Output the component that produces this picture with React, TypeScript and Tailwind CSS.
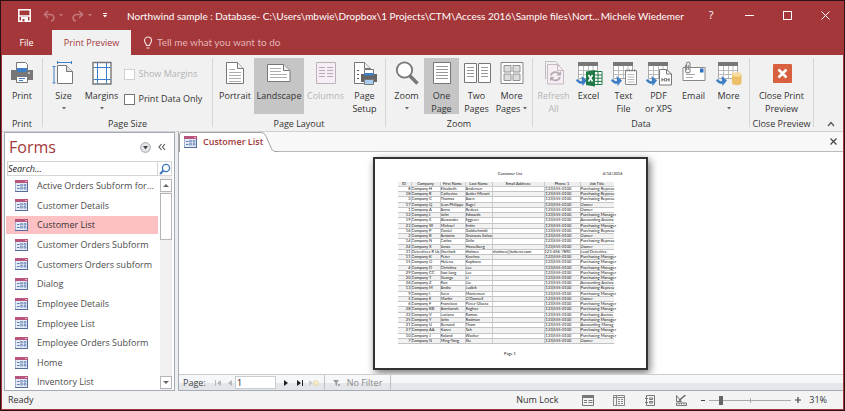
import type { ReactNode } from "react";

const FORMS = [
  "Active Orders Subform for...",
  "Customer Details",
  "Customer List",
  "Customer Orders Subform",
  "Customers Orders subform",
  "Dialog",
  "Employee Details",
  "Employee List",
  "Employee Orders Subform",
  "Home",
  "Inventory List",
];

const PHONE = "(123)555-0100";
const MANAGER = "Purchasing Manager";
const REP = "Purchasing Represe";

const HEADERS = ["ID", "Company", "First Name", "Last Name", "Email Address", "Phone 1", "Job Title"];

const COLUMN_WIDTHS = [
  "w-[14px]",
  "w-[29px]",
  "w-[25px]",
  "w-[27px]",
  "w-[52px]",
  "w-[36px]",
  "w-[33px]",
];

const CUSTOMERS: string[][] = [
  ["8", "Company H", "Elizabeth", "Andersen", "", PHONE, REP],
  ["18", "Company R", "Catherine", "Autier Miconi", "", PHONE, REP],
  ["3", "Company C", "Thomas", "Axen", "", PHONE, REP],
  ["17", "Company Q", "Jean Philippe", "Bagel", "", PHONE, "Owner"],
  ["1", "Company A", "Anna", "Bedecs", "", PHONE, "Owner"],
  ["12", "Company L", "John", "Edwards", "", PHONE, MANAGER],
  ["19", "Company S", "Alexander", "Eggerer", "", PHONE, "Accounting Assista"],
  ["23", "Company W", "Michael", "Entin", "", PHONE, MANAGER],
  ["16", "Company P", "Daniel", "Goldschmidt", "", PHONE, REP],
  ["2", "Company B", "Antonio", "Gratacos Solsona", "", PHONE, "Owner"],
  ["14", "Company N", "Carlos", "Grilo", "", PHONE, REP],
  ["24", "Company X", "Jonas", "Hasselberg", "", PHONE, "Owner"],
  ["31", "Detectives R Us", "Sherlock", "Holmes", "sholmes@bakerst.com", "123-456-7890", "Lead Detective"],
  ["11", "Company K", "Peter", "Krschne", "", PHONE, MANAGER],
  ["15", "Company O", "Helena", "Kupkova", "", PHONE, MANAGER],
  ["4", "Company D", "Christina", "Lee", "", PHONE, MANAGER],
  ["29", "Company CC", "Soo Jung", "Lee", "", PHONE, MANAGER],
  ["20", "Company T", "George", "Li", "", PHONE, MANAGER],
  ["26", "Company Z", "Run", "Liu", "", PHONE, "Accounting Assista"],
  ["13", "Company M", "Andre", "Ludick", "", PHONE, REP],
  ["9", "Company I", "Sven", "Mortensen", "", PHONE, MANAGER],
  ["5", "Company E", "Martin", "O'Donnell", "", PHONE, "Owner"],
  ["6", "Company F", "Francisco", "Pérez-Olaeta", "", PHONE, MANAGER],
  ["28", "Company BB", "Amritansh", "Raghav", "", PHONE, MANAGER],
  ["22", "Company V", "Luciana", "Ramos", "", PHONE, "Purchasing Assista"],
  ["25", "Company Y", "John", "Rodman", "", PHONE, MANAGER],
  ["21", "Company U", "Bernard", "Tham", "", PHONE, "Accounting Manag"],
  ["27", "Company AA", "Karen", "Toh", "", PHONE, MANAGER],
  ["10", "Company J", "Roland", "Wacker", "", PHONE, MANAGER],
  ["7", "Company G", "Ming-Yang", "Xie", "", PHONE, "Owner"],
];

function Icon({ children, className = "size-6" }: { children: ReactNode; className?: string }) {
  return (
    <svg viewBox="0 0 24 24" fill="none" className={`shrink-0 ${className}`} aria-hidden="true">
      {children}
    </svg>
  );
}

function Caret({ className = "text-[#666]" }: { className?: string }) {
  return (
    <svg viewBox="0 0 4 3" className={`inline-block h-[3px] w-1 shrink-0 ${className}`} aria-hidden="true">
      <path d="M0 0h4L2 2.6z" fill="currentColor" />
    </svg>
  );
}

function FormIcon() {
  return (
    <svg viewBox="0 0 13 12" className="h-3 w-[13px] shrink-0" aria-hidden="true">
      <rect x="0" y="0" width="13" height="12" fill="#a3b1cc" />
      <rect x="1" y="3" width="11" height="8" fill="#e4ebf7" />
      <rect x="0" y="0" width="13" height="3" fill="#b8557d" />
      <rect x="10" y="1" width="2" height="1" fill="#eeb5c9" />
      <path d="M2 5.5h2.5M2 8.500h2.5" stroke="#5f7cae" />
      <path d="M5.500 4.500h2v1.600h-2zM9 4.500h2v1.600H9zM5.500 7.500h2v1.600h-2zM9 7.500h2v1.600H9z" fill="#b9c9e4" stroke="#6b86b5" strokeWidth=".7" />
      <path d="M0 11.500h13M12.500 3v9" stroke="#566c9a" />
    </svg>
  );
}

const PrintIcon = (
  <Icon>
    <path d="M6.500 1.500h9l2 2v7h-11z" fill="#fff" stroke="#777" />
    <path d="M1 9h22v10H1z" fill="#777" />
    <path d="M7 7h10v4H7z" fill="#3d7ec4" />
    <path d="M18 12h2" stroke="#fff" />
    <path d="M6.500 15.500h11v6h-11z" fill="#fff" stroke="#777" />
    <path d="M9 17.500h6M9 19.500h4" stroke="#3d7ec4" />
  </Icon>
);

const SizeIcon = (
  <Icon>
    <path d="M5.500 4.500h9l6 6v12h-15z" fill="#fff" stroke="#777" />
    <path d="M14.500 4.500v6h6" fill="#ddd" stroke="#777" />
    <path d="M5 1.500h15M5.500 0v3M19.500 0v3M2 5v17M.5 5.500h3M.5 22h3" stroke="#3d7ec4" />
  </Icon>
);

const MarginsIcon = (
  <Icon>
    <path d="M3 1.500h18v21.500H3z" fill="#fff" stroke="#777" strokeWidth="1.400" />
    <path d="M7.500 2v20.500M16.500 2v20.500M3.500 6.500h17M3.500 18.500h17" stroke="#3d7ec4" />
  </Icon>
);

const PortraitIcon = (
  <Icon>
    <path d="M3.500 1.500h11l6 6v15h-17z" fill="#fff" stroke="#777" />
    <path d="M14.500 1.500v6h6" fill="#eee" stroke="#777" />
    <path d="M6 8.500h6M6 11.500h12M6 14.500h12M6 17.500h12M6 20.500h12" stroke="#999" strokeWidth=".8" />
  </Icon>
);

const LandscapeIcon = (
  <Icon>
    <path d="M.5 3.500h16l6.500 6v11H.5z" fill="#fff" stroke="#777" />
    <path d="M16.500 3.500v6h6" fill="#eee" stroke="#777" />
    <path d="M3 7.500h11M3 10.500h11M3 13.500h17M3 16.500h17" stroke="#999" strokeWidth=".8" />
  </Icon>
);

const ColumnsIcon = (
  <Icon>
    <path d="M2.500 1.500h19v21h-19z" fill="#f6eef4" stroke="#bbb3b9" />
    <path d="M5 6.500h6M5 9.500h6M5 12.500h6M5 15.500h6M13 6.500h6M13 9.500h6M13 12.500h6M13 15.500h6" stroke="#b9a9b5" />
  </Icon>
);

const PageSetupIcon = (
  <Icon>
    <path d="M1.500 1.500h10l6 6v15h-16z" fill="#fff" stroke="#777" />
    <path d="M11.500 1.500v6h6" fill="#eee" stroke="#777" />
    <path d="M4 9.500h2M4 13.500h2M4 17.500h2" stroke="#555" />
    <path d="M11.500 8.500h9v4h-9z" fill="#fff" stroke="#777" />
    <path d="M8 13h16v8H8z" fill="#666" />
    <path d="M11 12h10v2.500H11z" fill="#3d7ec4" />
    <path d="M11.500 18.500h9v5h-9z" fill="#a9cdf0" stroke="#777" />
  </Icon>
);

const ZoomIcon = (
  <Icon>
    <path d="M14.500 14.500l8 8" stroke="#777" strokeWidth="3.500" />
    <circle cx="9.500" cy="9" r="7.700" fill="#fff" stroke="#777" strokeWidth="1.800" />
  </Icon>
);

const OnePageIcon = (
  <Icon>
    <path d="M3.500 1.500h17v21h-17z" fill="#fff" stroke="#777" />
    <path d="M6 5.500h12M6 8.500h12M6 11.500h12M6 14.500h12M6 17.500h12" stroke="#999" />
  </Icon>
);

const TwoPagesIcon = (
  <svg viewBox="0 0 28 24" fill="none" className="h-6 w-7 shrink-0" aria-hidden="true">
    <path d="M1.500 2.500h12v19h-12zM15.500 2.500h12v19h-12z" fill="#fff" stroke="#777" />
    <path d="M4 6.500h7M4 9.500h7M4 12.500h7M4 15.500h7M18 6.500h7M18 9.500h7M18 12.500h7M18 15.500h7" stroke="#999" />
  </svg>
);

const MorePagesIcon = (
  <Icon>
    <path d="M1 1.500h22v21H1z" fill="#fff" stroke="#888" />
    <path d="M4 4.500h7v6.500H4zM13 4.500h7v6.500h-7zM4 13h7v6.500H4zM13 13h7v6.500h-7z" fill="#ddd" stroke="#888" strokeWidth=".9" />
  </Icon>
);

const RefreshIcon = (
  <Icon>
    <path d="M3.500 18V.5h10l4 4" stroke="#c4bac2" />
    <path d="M5.500 3.500h10l6 6v13.500h-16z" fill="#f6eef4" stroke="#c4bac2" />
    <path d="M15.500 3.500v6h6" stroke="#c4bac2" />
    <path d="M9 14.500c.8-4 6-4.500 8.500-1.500M18 16c-1 4-6 4.500-8.500 1.500" stroke="#b3abb1" strokeWidth="1.800" />
    <path d="M19 10v4.500h-4.500zM8 20.500V16h4.500z" fill="#b3abb1" />
  </Icon>
);

function ExportBase({ children }: { children: ReactNode }) {
  return (
    <svg viewBox="0 0 28 26" fill="none" className="-mb-[2px] h-[26px] w-7 shrink-0" aria-hidden="true">
      <path d="M3.500 1.500h19v16h-19z" fill="#fff" stroke="#aaa" />
      <path d="M3 1h20v4H3z" fill="#777" />
      <path d="M8.500 5v12M13.500 5v12M18 5v12M4 9.500h18M4 13.500h18" stroke="#bbb" />
      <path d="M2 18.500c1.500 3.500 4.500 3.500 7.500 2" stroke="#3d7ec4" strokeWidth="2.600" />
      <path d="M6.500 15l5.500 4.500-4.500 5.500z" fill="#3d7ec4" />
      {children}
    </svg>
  );
}

const ExcelIcon = (
  <ExportBase>
    <path d="M19 10.500h8v13h-8z" fill="#fff" stroke="#1f7a46" />
    <path d="M19 14h8M19 17.200h8M19 20.400h8M23 10.500v13" stroke="#1f7a46" />
    <path d="M11 10.500l9-1.500v16.500l-9-1.500z" fill="#1f7a46" />
    <path d="M13.500 14l4 6.500M17.500 14l-4 6.500" stroke="#fff" strokeWidth="1.500" />
  </ExportBase>
);

const TextFileIcon = (
  <ExportBase>
    <path d="M15.500 9.500h11v14h-11z" fill="#fff" stroke="#888" />
    <path d="M17 8.500v2M19.500 8.500v2M22 8.500v2M24.500 8.500v2" stroke="#777" />
    <path d="M17.500 13.500h7M17.500 16h7M17.500 18.500h7M17.500 21h7" stroke="#aaa" strokeWidth=".8" />
  </ExportBase>
);

const PdfIcon = (
  <ExportBase>
    <path d="M14.500 8.500h7l5 4.500v11h-12z" fill="#fff" stroke="#777" />
    <path d="M21.500 8.500v4.500h5" stroke="#777" />
    <path d="M17 17v3.500M24 17v3.500M17 18.800h2M22 18.800h2" stroke="#666" />
    <path d="M19.500 17.500h2v2.500h-2z" stroke="#666" strokeWidth=".8" />
  </ExportBase>
);

const EmailIcon = (
  <Icon>
    <path d="M1 6.500h22v13H1z" fill="#fff" stroke="#888" />
    <path d="M18 7.500h3.500v4H18z" fill="#2f6fc2" />
    <path d="M4 13.500h9M4 16.500h7" stroke="#aaa" />
    <path d="M3.500 4v6c0 2.500 4.500 2.500 4.500 0V3c0-3-3.500-2.500-3.500 0v6M6.300 4v5" stroke="#888" strokeWidth="1.100" />
  </Icon>
);

const MoreDataIcon = (
  <ExportBase>
    <path d="M17 13.500v8.500c0 3 9.500 3 9.500 0v-8.500z" fill="#ecc068" />
    <ellipse cx="21.750" cy="13.500" rx="4.750" ry="2.200" fill="#f7dc9c" />
  </ExportBase>
);

const ClosePreviewIcon = (
  <Icon>
    <rect x="3" y="3" width="19" height="19" rx="1" fill="#d9603f" />
    <path d="M8.500 8.500l8 8M16.500 8.500l-8 8" stroke="#fff" strokeWidth="2.500" />
  </Icon>
);

type RibbonButtonProps = {
  icon: ReactNode;
  lines: string[];
  width?: string;
  caret?: boolean;
  active?: boolean;
  disabled?: boolean;
};

function RibbonButton({ icon, lines, width = "w-[35px]", caret, active, disabled }: RibbonButtonProps) {
  const inlineCaret = caret && lines.length > 1;
  return (
    <button
      type="button"
      disabled={disabled}
      aria-pressed={active}
      className={`flex h-14 shrink-0 flex-col items-center pt-[3px] whitespace-nowrap ${width} ${
        active ? "bg-[#c5c5c5]" : ""
      } ${disabled ? "text-[#b5b5b5]" : ""}`}
    >
      <span className="mb-1 flex h-6 items-start">{icon}</span>
      {lines.map((line, index) => (
        <span key={line} className="flex items-center gap-[3px] leading-[13px]">
          {line}
          {inlineCaret && index === lines.length - 1 ? <Caret /> : null}
        </span>
      ))}
      {caret && !inlineCaret ? (
        <span className="flex h-3 items-center">
          <Caret />
        </span>
      ) : null}
    </button>
  );
}

function RibbonGroup({ label, width, children }: { label: string; width: string; children: ReactNode }) {
  return (
    <section aria-label={label} className={`flex shrink-0 pt-[3px] pb-1 ${width}`}>
      <div className="flex min-w-0 flex-1 flex-col">
        <div className="flex justify-center">{children}</div>
        <div className="pt-[3px] text-center leading-[14px] whitespace-nowrap">{label}</div>
      </div>
      <div className="w-px bg-[#d6d6d6]" />
    </section>
  );
}

function TitleBar() {
  return (
    <header className="flex h-[29px] shrink-0 items-center text-white">
      <div className="flex w-[126px] shrink-0 items-center pl-[17px]">
        <button type="button" aria-label="Save">
          <svg viewBox="0 0 13 13" fill="none" className="size-[13px]" aria-hidden="true">
            <path d="M.8.8h11.400v11.400H.8z" stroke="#fff" strokeWidth="1.500" />
            <path d="M1 7h11" stroke="#fff" strokeWidth="1.500" />
            <path d="M3 8h7v4.500H3z" fill="#fff" />
            <path d="M4.500 10h2v2.500h-2z" fill="#a4373a" />
          </svg>
        </button>
        <button type="button" aria-label="Undo" className="ml-3 flex items-center gap-1 text-[#c4777a]">
          <svg viewBox="0 0 12 12" fill="none" className="size-3" aria-hidden="true">
            <path d="M5 1L1.500 4.500 5 8M1.500 4.500H7c5 0 5 6 1 6.500" stroke="currentColor" strokeWidth="1.600" />
          </svg>
          <Caret className="text-[#c4777a]" />
        </button>
        <button type="button" aria-label="Redo" className="ml-[9px] flex items-center gap-1 text-[#c4777a]">
          <svg viewBox="0 0 12 12" fill="none" className="size-3" aria-hidden="true">
            <path d="M7 1l3.500 3.500L7 8M10.500 4.500H5c-5 0-5 6-1 6.500" stroke="currentColor" strokeWidth="1.600" />
          </svg>
          <Caret className="text-[#c4777a]" />
        </button>
        <button type="button" aria-label="Customize Quick Access Toolbar" className="ml-[11px] flex flex-col items-center gap-px">
          <span className="h-px w-1 bg-white" />
          <Caret className="text-white" />
        </button>
      </div>
      <h1 className="min-w-0 flex-1 truncate font-[Lato,'Open_Sans',sans-serif] text-[10px] leading-4">
        Northwind sample : Database- C:\Users\mbwie\Dropbox\1 Projects\CTM\Access 2016\Sample files\Nort...
      </h1>
      <div className="flex shrink-0 items-center">
        <button type="button" className="mr-2 font-[Lato,'Open_Sans',sans-serif] text-[10px] leading-4">
          Michele Wiedemer
        </button>
        <button type="button" aria-label="Help" className="flex w-[38px] justify-center text-[11px]">
          ?
        </button>
        <button type="button" aria-label="Minimize" className="flex w-[38px] justify-center">
          <span className="h-px w-[9px] bg-white" />
        </button>
        <button type="button" aria-label="Maximize" className="flex w-[38px] justify-center">
          <span className="size-[9px] border border-white" />
        </button>
        <button type="button" aria-label="Close" className="flex w-[38px] justify-center">
          <svg viewBox="0 0 9 9" className="size-[9px]" aria-hidden="true">
            <path d="M.5.5l8 8M8.500.5l-8 8" stroke="#fff" />
          </svg>
        </button>
      </div>
    </header>
  );
}

function TabRow() {
  return (
    <nav className="flex h-[25px] shrink-0 items-stretch text-white">
      <button type="button" className="w-[51px]">File</button>
      <button type="button" className="w-[79px] bg-[#f1f1f1] text-[#a4373a]">
        Print Preview
      </button>
      <button type="button" className="ml-3 flex items-center gap-1 font-[Lato,'Open_Sans',sans-serif] text-[10px] text-[#e3b6b7]">
        <svg viewBox="0 0 10 13" fill="none" className="h-[13px] w-[10px]" aria-hidden="true">
          <path d="M3.500 9.500c0-2-2-2.500-2-5a3.500 3.500 0 017 0c0 2.500-2 3-2 5zM3.500 12h3" stroke="#f6e3e3" strokeWidth="1.100" />
        </svg>
        Tell me what you want to do
      </button>
    </nav>
  );
}

function Ribbon() {
  return (
    <div className="flex h-[77px] shrink-0 border-b border-[#d2d2d2] bg-[#f1f1f1] text-[#333]">
      <RibbonGroup label="Print" width="w-[41px]">
        <RibbonButton icon={PrintIcon} lines={["Print"]} width="w-[38px]" />
      </RibbonGroup>
      <RibbonGroup label="Page Size" width="w-[170px]">
        <RibbonButton icon={SizeIcon} lines={["Size"]} width="w-[38px]" caret />
        <RibbonButton icon={MarginsIcon} lines={["Margins"]} width="w-[38px]" caret />
        <div className="flex w-[90px] flex-col gap-[11px] pt-[9px] pl-[3px]">
          <label className="flex items-center gap-1 leading-[14px] whitespace-nowrap text-[#b5b5b5]">
            <input type="checkbox" disabled className="size-[11px] appearance-none border border-[#d0d0d0] bg-white" />
            Show Margins
          </label>
          <label className="flex items-center gap-1 leading-[14px] whitespace-nowrap">
            <input
              type="checkbox"
              className="size-[11px] appearance-none border border-[#777] bg-white checked:bg-[#a4373a]"
            />
            Print Data Only
          </label>
        </div>
      </RibbonGroup>
      <RibbonGroup label="Page Layout" width="w-[173px]">
        <RibbonButton icon={PortraitIcon} lines={["Portrait"]} width="w-[38px]" />
        <RibbonButton icon={LandscapeIcon} lines={["Landscape"]} width="w-[50px]" active />
        <RibbonButton icon={ColumnsIcon} lines={["Columns"]} width="w-[43px]" disabled />
        <RibbonButton icon={PageSetupIcon} lines={["Page", "Setup"]} />
      </RibbonGroup>
      <RibbonGroup label="Zoom" width="w-[147px]">
        <RibbonButton icon={ZoomIcon} lines={["Zoom"]} caret />
        <RibbonButton icon={OnePageIcon} lines={["One", "Page"]} active />
        <RibbonButton icon={TwoPagesIcon} lines={["Two", "Pages"]} />
        <RibbonButton icon={MorePagesIcon} lines={["More", "Pages"]} caret />
      </RibbonGroup>
      <RibbonGroup label="Data" width="w-[217px]">
        <RibbonButton icon={RefreshIcon} lines={["Refresh", "All"]} disabled />
        <RibbonButton icon={ExcelIcon} lines={["Excel"]} />
        <RibbonButton icon={TextFileIcon} lines={["Text", "File"]} />
        <RibbonButton icon={PdfIcon} lines={["PDF", "or XPS"]} />
        <RibbonButton icon={EmailIcon} lines={["Email"]} />
        <RibbonButton icon={MoreDataIcon} lines={["More"]} caret />
      </RibbonGroup>
      <RibbonGroup label="Close Preview" width="w-[64px]">
        <RibbonButton icon={ClosePreviewIcon} lines={["Close Print", "Preview"]} width="w-[60px]" />
      </RibbonGroup>
      <div className="flex flex-1 items-end justify-end pr-2 pb-1">
        <button type="button" aria-label="Collapse the Ribbon">
          <svg viewBox="0 0 8 6" fill="none" className="h-[6px] w-2" aria-hidden="true">
            <path d="M1 5l3-3.500L7 5" stroke="#555" strokeWidth="1.300" />
          </svg>
        </button>
      </div>
    </div>
  );
}

function NavigationPane() {
  return (
    <aside className="flex w-[171px] shrink-0 flex-col overflow-hidden border border-[#a5abb5] bg-white">
      <div className="flex h-7 shrink-0 items-center pr-2 pl-1">
        <h2 className="flex-1 text-[16px] leading-7 text-[#a4373a]">Forms</h2>
        <button type="button" aria-label="Filter objects">
          <svg viewBox="0 0 11 11" className="size-[11px]" aria-hidden="true">
            <circle cx="5.500" cy="5.500" r="4.800" fill="#e8eaee" stroke="#999da5" />
            <path d="M3 4h5L5.500 7.500z" fill="#444" />
          </svg>
        </button>
        <button type="button" aria-label="Shutter bar" className="ml-[7px]">
          <svg viewBox="0 0 8 8" fill="none" className="size-2" aria-hidden="true">
            <path d="M3.500 1L1 4l2.500 3M7 1L4.500 4 7 7" stroke="#555" strokeWidth="1.100" />
          </svg>
        </button>
      </div>
      <div className="mx-[2px] flex h-[15px] shrink-0 border border-[#d5d5d5]">
        <input
          type="text"
          aria-label="Search"
          placeholder="Search..."
          className="min-w-0 flex-1 italic outline-none placeholder:text-[#222]"
        />
        <button type="button" aria-label="Search forms" className="flex w-[14px] items-center justify-center border-l border-[#d5d5d5]">
          <svg viewBox="0 0 12 12" fill="none" className="size-3" aria-hidden="true">
            <circle cx="7" cy="5" r="3.600" stroke="#3d74b5" strokeWidth="1.300" />
            <path d="M4.500 7.500L1 11" stroke="#3d74b5" strokeWidth="2" />
          </svg>
        </button>
      </div>
      <div className="flex min-h-0 flex-1">
        <ul className="-mb-[2px] flex min-w-0 flex-1 flex-col pl-px">
          {FORMS.map((form) => (
            <li key={form} className="flex flex-1 items-center">
              <button
                type="button"
                className={`flex h-[18px] w-full items-center gap-[9px] pl-[9px] text-left whitespace-nowrap ${
                  form === "Customer List" ? "bg-[#fdc0c3] text-[#333]" : "text-[#4c4c4c]"
                }`}
              >
                <FormIcon />
                {form}
              </button>
            </li>
          ))}
        </ul>
        <div className="mr-[2px] ml-[2px] flex w-3 shrink-0 flex-col bg-[#f0f0f0] pt-[3px] pb-px">
          <button type="button" aria-label="Scroll up" className="flex h-[13px] items-center justify-center border border-[#b5b5b5] bg-white">
            <svg viewBox="0 0 6 3" className="h-[3px] w-[6px]" aria-hidden="true">
              <path d="M0 3h6L3 0z" fill="#666" />
            </svg>
          </button>
          <div className="mt-px h-[47px] border border-[#b5b5b5] bg-white" />
          <button type="button" aria-label="Scroll down" className="mt-auto flex h-[13px] items-center justify-center border border-[#b5b5b5] bg-white">
            <svg viewBox="0 0 6 3" className="h-[3px] w-[6px]" aria-hidden="true">
              <path d="M0 0h6L3 3z" fill="#666" />
            </svg>
          </button>
        </div>
      </div>
    </aside>
  );
}

function ReportPage() {
  return (
    <article className="mr-[2px] flex h-[213px] w-[275px] flex-col border-2 border-[#333] bg-white px-[23px] font-[Lato,'Liberation_Sans',sans-serif] text-[4px] text-[#111] shadow-[2px_3px_8px_rgba(0,0,0,0.55)]">
      <div className="grid h-[23px] shrink-0 grid-cols-[1fr_auto_1fr] items-end pb-[6px] leading-[5px]">
        <span />
        <span>Customer List</span>
        <span className="text-right">4/14/2016</span>
      </div>
      <table className="flex h-[162px] w-[216px] shrink-0 flex-col leading-[4px]">
        <thead className="flex shrink-0">
          <tr className="flex h-[5px] border-b border-[#ccc] bg-[#eee]">
            {HEADERS.map((header, index) => (
              <th
                key={header}
                scope="col"
                className={`shrink-0 border-[#ccc] p-0 text-center font-normal whitespace-nowrap not-last:border-r ${COLUMN_WIDTHS[index]}`}
              >
                {header}
              </th>
            ))}
          </tr>
        </thead>
        <tbody className="flex min-h-0 flex-1 flex-col">
          {CUSTOMERS.map((row) => (
            <tr key={row[0]} className="flex min-h-0 flex-1 border-b border-[#c4c4c4] even:bg-[#f2f2f2]">
              {row.map((cell, index) => (
                <td
                  key={HEADERS[index]}
                  className={`shrink-0 border-[#ccc] p-0 whitespace-nowrap not-last:overflow-hidden not-last:border-r ${COLUMN_WIDTHS[index]} ${
                    index === 0 ? "text-right" : ""
                  }`}
                >
                  {cell}
                </td>
              ))}
            </tr>
          ))}
        </tbody>
      </table>
      <div className="pt-[7px] text-center leading-[5px]">Page 1</div>
    </article>
  );
}

function RecordNavigator() {
  return (
    <div className="flex h-4 shrink-0 items-stretch border-t border-[#c9ccd1] bg-linear-to-b from-[#f6f7f9] from-50% to-[#e4e6ea] to-50% text-[#444]">
      <div className="flex w-[145px] items-center pl-1">
        <label htmlFor="page-number" className="w-7 leading-[14px]">Page:</label>
        <button type="button" aria-label="First page" className="flex w-[14px] justify-center">
          <svg viewBox="0 0 6 6" className="size-[6px]" aria-hidden="true"><path d="M0 0h1v6H0zM6 0v6L2 3z" fill="#b5b8bf" /></svg>
        </button>
        <button type="button" aria-label="Previous page" className="flex w-[10px] justify-center">
          <svg viewBox="0 0 6 6" className="size-[6px]" aria-hidden="true"><path d="M5 0v6L1 3z" fill="#b5b8bf" /></svg>
        </button>
        <input
          id="page-number"
          type="text"
          defaultValue="1"
          className="h-[13px] w-[41px] border border-[#c9ccd1] bg-white pl-px text-[#222] outline-none"
        />
        <button type="button" aria-label="Next page" className="ml-[3px] flex w-[14px] justify-center">
          <svg viewBox="0 0 6 6" className="size-[6px]" aria-hidden="true"><path d="M1 0v6l4-3z" fill="#222" /></svg>
        </button>
        <button type="button" aria-label="Last page" className="flex w-[14px] justify-center">
          <svg viewBox="0 0 6 6" className="size-[6px]" aria-hidden="true"><path d="M5 0h1v6H5zM0 0v6l4-3z" fill="#222" /></svg>
        </button>
        <button type="button" aria-label="New record" className="flex w-[14px] justify-center">
          <svg viewBox="0 0 10 6" className="h-[6px] w-[10px]" aria-hidden="true"><path d="M0 0v6l4-3z" fill="#ccc" /><path d="M5 1h4v4H5z" fill="#f7edc8" stroke="#e6d79c" strokeWidth=".7" /></svg>
        </button>
      </div>
      <button type="button" disabled className="flex w-[67px] items-center justify-center gap-[6px] border-x border-[#bfc3c9] text-[#888]">
        <svg viewBox="0 0 8 8" fill="none" className="size-2" aria-hidden="true">
          <path d="M0 1h6L4 4v3L2.500 6V4z" fill="#999" />
          <path d="M5 5l2 2M7 5L5 7" stroke="#999" strokeWidth=".8" />
        </svg>
        No Filter
      </button>
    </div>
  );
}

function DocumentArea() {
  return (
    <main className="flex min-w-0 flex-1 flex-col border-b border-l border-[#a5abb5] bg-white">
      <div className="flex h-[20px] shrink-0 items-stretch justify-between border-b border-[#b8bcc2] bg-[#f8f8f8]">
        <button type="button" className="relative -mb-px flex w-[100px] items-center gap-[6px] pl-[5px] font-semibold whitespace-nowrap text-[#a4373a]">
          <svg viewBox="0 0 100 20" fill="none" className="absolute inset-0 size-full" aria-hidden="true">
            <path d="M0 20V3Q0 .5 3 .5h79c3 0 4 2 5 4l5 11c1 2.500 2 4 5 4h3V20z" fill="#fff" />
            <path d="M.5 20V3Q.5.5 3 .5h79c3 0 4 2 5 4l5 11c1 2.500 2 4 5 4h3" stroke="#a8a098" />
          </svg>
          <span className="relative"><FormIcon /></span>
          <span className="relative">Customer List</span>
        </button>
        <button type="button" aria-label="Close tab" className="px-[6px]">
          <svg viewBox="0 0 7 7" className="size-[7px]" aria-hidden="true">
            <path d="M.5.5l6 6M6.500.5l-6 6" stroke="#444" strokeWidth="1.200" />
          </svg>
        </button>
      </div>
      <div className="flex flex-1 items-start justify-center pt-[5px]">
        <ReportPage />
      </div>
      <RecordNavigator />
    </main>
  );
}

function StatusBar() {
  return (
    <footer className="flex h-[18px] shrink-0 items-center bg-[#f3f3f3] pr-4 pl-[6px] text-[#333]">
      <span className="flex-1">Ready</span>
      <span className="w-[66px]">Num Lock</span>
      <div className="flex w-[119px] gap-[19px]">
        <button type="button" aria-label="Report view">
          <svg viewBox="0 0 12 11" fill="none" className="h-[11px] w-3" aria-hidden="true">
            <path d="M.5.5h11v10H.5z" stroke="#777" /><path d="M0 0h12v3H0z" fill="#777" />
            <path d="M2 5.500h3M2 7.500h3M6.500 5.500h4M6.500 7.500h4" stroke="#777" />
          </svg>
        </button>
        <button type="button" aria-label="Print preview">
          <svg viewBox="0 0 12 11" fill="none" className="h-[11px] w-3" aria-hidden="true">
            <path d="M.5.5h11v10H.5zM.5 2.500h11M3.500.5v10" stroke="#888" />
            <path d="M5 4.500h2M8 4.500h2M5 6.500h2M8 6.500h2M5 8.500h2M8 8.500h2" stroke="#888" />
          </svg>
        </button>
        <button type="button" aria-label="Layout view">
          <svg viewBox="0 0 12 11" fill="none" className="h-[11px] w-3" aria-hidden="true">
            <path d="M2.500.5h8v10h-8zM1 3.500h3M1 7.500h3" stroke="#777" />
            <path d="M5.500 3h3v1.500h-3zM5.500 6.500h3V8h-3z" stroke="#777" />
          </svg>
        </button>
        <button type="button" aria-label="Design view">
          <svg viewBox="0 0 12 11" fill="none" className="h-[11px] w-3" aria-hidden="true">
            <path d="M1.500.5v6h5z" stroke="#777" /><path d="M4 5.500L10.500 0" stroke="#666" strokeWidth="1.500" />
            <path d="M1.500 8h10v2.500h-10zM4 8v1.500M6.500 8v1.500M9 8v1.500" stroke="#777" />
          </svg>
        </button>
      </div>
      <button type="button" aria-label="Zoom out" className="flex w-1 items-center"><span className="h-px w-1 bg-[#444]" /></button>
      <input
        type="range"
        min={0}
        max={100}
        defaultValue={13}
        aria-label="Zoom"
        className="mx-1 h-[10px] w-[82px] appearance-none bg-[linear-gradient(#aaa,#aaa),linear-gradient(#aaa,#aaa)] bg-size-[100%_1px,1px_5px] bg-center bg-no-repeat [&::-webkit-slider-thumb]:h-[9px] [&::-webkit-slider-thumb]:w-1 [&::-webkit-slider-thumb]:appearance-none [&::-webkit-slider-thumb]:bg-[#666]"
      />
      <button type="button" aria-label="Zoom in" className="mr-2 flex w-[6px] items-center">
        <svg viewBox="0 0 6 6" className="size-[6px]" aria-hidden="true"><path d="M3 0v6M0 3h6" stroke="#444" strokeWidth="1.200" /></svg>
      </button>
      <span>31%</span>
    </footer>
  );
}

export default function App() {
  return (
    <div className="flex min-h-screen w-full flex-col border border-[#2d1013] bg-[#a4373a] font-['Open_Sans','Noto_Sans',sans-serif] text-[9px]">
      <TitleBar />
      <TabRow />
      <div className="mx-px mb-px flex flex-1 flex-col bg-[#f1f1f1]">
        <Ribbon />
        <div className="flex min-h-0 flex-1 gap-[3px] bg-[#eceef0] pl-[2px]">
          <NavigationPane />
          <DocumentArea />
        </div>
        <StatusBar />
      </div>
    </div>
  );
}
